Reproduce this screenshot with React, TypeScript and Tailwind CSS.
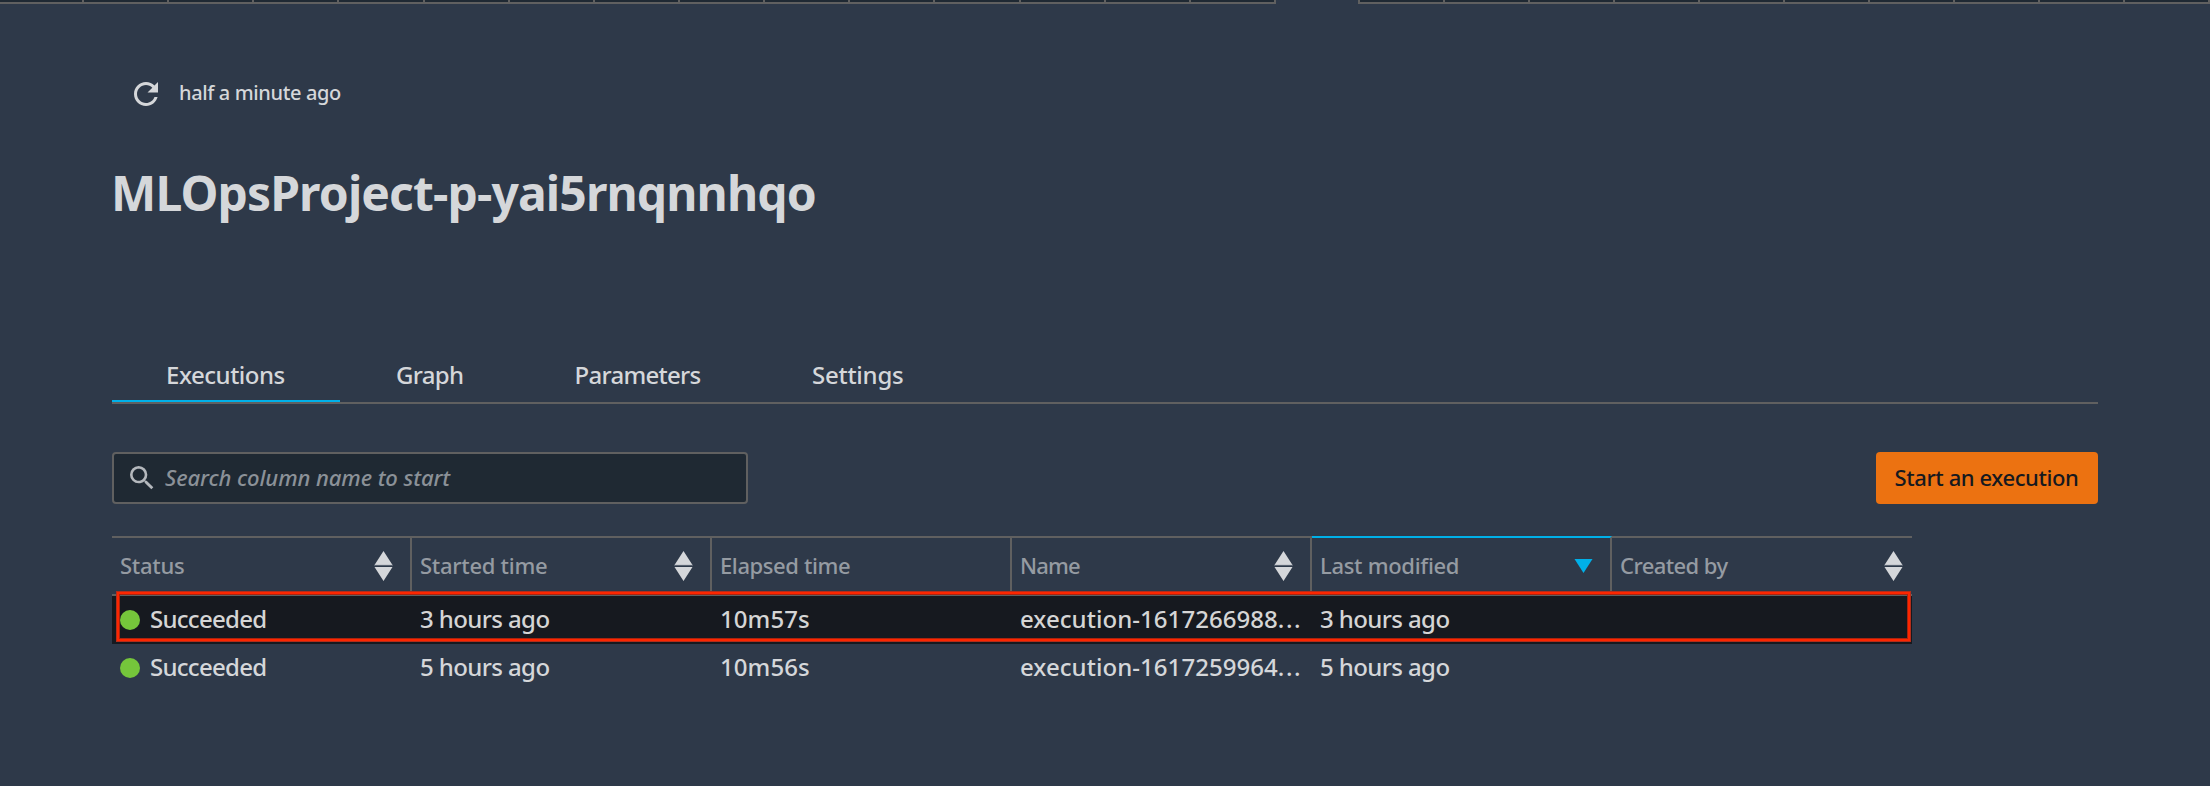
import React from "react";

const tabs = [
  { label: "Executions", cls: "w-[228px] pl-[54px] tracking-[-0.48px]", active: true },
  { label: "Graph", cls: "w-[179px] pl-[56px] tracking-[-0.68px]", active: false },
  { label: "Parameters", cls: "w-[237px] pl-[55.5px] tracking-[-0.71px]", active: false },
  { label: "Settings", cls: "w-[202px] pl-[56px] tracking-[-0.25px]", active: false },
];

type Sort = "none" | "both" | "desc";

const columns: { label: string; cls: string; sort: Sort }[] = [
  { label: "Status", cls: "pl-2 tracking-[-0.27px]", sort: "both" },
  { label: "Started time", cls: "pl-2 tracking-[-0.28px]", sort: "both" },
  { label: "Elapsed time", cls: "pl-2 tracking-[-0.4px]", sort: "none" },
  { label: "Name", cls: "pl-2 tracking-[-0.8px]", sort: "both" },
  { label: "Last modified", cls: "pl-2 tracking-[-0.3px]", sort: "desc" },
  { label: "Created by", cls: "pl-2 tracking-[-0.58px]", sort: "both" },
];

const rows = [
  { status: "Succeeded", started: "3 hours ago", elapsed: "10m57s", name: "execution-1617266988", modified: "3 hours ago", selected: true },
  { status: "Succeeded", started: "5 hours ago", elapsed: "10m56s", name: "execution-1617259964", modified: "5 hours ago", selected: false },
];

function TopStrip() {
  return (
    <div className="flex h-1 w-full">
      <div className="flex w-[1276px] border-b-2 border-[#606060] bg-[#1f2933]">
        <div className="w-[84px] border-r-2 border-[#606060]" />
        {Array.from({ length: 14 }, (_, i) => (
          <div key={i} className="flex-1 border-r-2 border-[#606060]" />
        ))}
      </div>
      <div className="w-[82px]" />
      <div className="flex flex-1 border-b-2 border-l-2 border-[#606060] bg-[#1f2933]">
        {Array.from({ length: 10 }, (_, i) => (
          <div key={i} className="flex-1 border-r-2 border-[#606060]" />
        ))}
      </div>
    </div>
  );
}

function RefreshIcon() {
  return (
    <svg viewBox="0 0 24 24" className="size-9" fill="#d5d7da">
      <path d="M17.65 6.35C16.2 4.9 14.21 4 12 4c-4.42 0-7.99 3.58-7.99 8s3.57 8 7.99 8c3.73 0 6.84-2.55 7.73-6h-2.08c-.82 2.33-3.04 4-5.65 4-3.31 0-6-2.69-6-6s2.69-6 6-6c1.66 0 3.14.69 4.22 1.78L13 11h7V4l-2.35 2.35z" />
    </svg>
  );
}

function SearchIcon() {
  return (
    <svg viewBox="0 0 24 24" className="size-8" fill="#b4b8bd">
      <path d="M15.5 14h-.79l-.28-.27A6.471 6.471 0 0 0 16 9.5 6.5 6.5 0 1 0 9.5 16c1.61 0 3.09-.59 4.23-1.57l.27.28v.79l5 4.99L20.49 19l-4.99-5zm-6 0C7.01 14 5 11.99 5 9.5S7.01 5 9.5 5 14 7.01 14 9.5 11.99 14 9.5 14z" />
    </svg>
  );
}

function SortIcon({ sort }: { sort: Sort }) {
  if (sort === "none") return null;
  if (sort === "desc") {
    return (
      <svg viewBox="0 0 19 30" className="h-[30px] w-[19px]" fill="#00b0e8">
        <path d="M0.5 8h18l-9 14z" />
      </svg>
    );
  }
  return (
    <svg viewBox="0 0 19 30" className="h-[30px] w-[19px]">
      <path d="M9.5 0L18.5 14H0.5z M0.5 16h18l-9 14z" fill="#d5d7da" />
      <path d="M0 14.3h19" stroke="#7d858f" strokeWidth="0.7" />
    </svg>
  );
}

export default function App() {
  return (
    <div className="h-[786px] w-full overflow-hidden bg-[#2e3949] font-['Noto_Sans','Open_Sans',sans-serif] font-medium text-[#d5d7da]">
      <TopStrip />
      <div className="px-28 pt-[72px]">
        <div className="flex h-9 items-center pl-4">
          <RefreshIcon />
          <span className="ml-[15px] pb-[3px] text-[20px] leading-7 tracking-[-0.37px]">half a minute ago</span>
        </div>

        <h1 className="-ml-px mt-[51px] h-[60px] text-[48px] leading-[60px] font-bold tracking-[-0.87px]">
          MLOpsProject-p-yai5rnqnnhqo
        </h1>

        <div className="mt-[127px] flex h-[54px] border-b-2 border-[#606060] text-[24px]">
          {tabs.map((t) => (
            <div key={t.label} className={`flex items-center border-b-2 ${t.active ? "border-[#00b0e8]" : "border-transparent"} ${t.cls}`}>
              {t.label}
            </div>
          ))}
        </div>

        <div className="mt-12 flex items-center justify-between text-[22px]">
          <div className="flex h-[52px] w-[636px] items-center rounded border-2 border-[#606060] bg-[#1f2933] pl-3">
            <SearchIcon />
            <span className="ml-[7px] pb-0.5 text-[#8b9198] italic tracking-[-0.08px]">Search column name to start</span>
          </div>
          <button className="flex h-[52px] w-[222px] items-center rounded bg-[#ec7211] pb-0.5 pl-[18.5px] tracking-[-0.4px] whitespace-nowrap text-[#16191f]">
            Start an execution
          </button>
        </div>

        <div className="relative mt-8 w-[1800px]">
          <div className="grid h-[60px] grid-cols-6 border-b-2 border-[#606060] text-[22px] text-[#959ba2]">
            {columns.map((c, i) => (
              <div
                key={c.label}
                className={`flex items-center justify-between border-t-2 ${c.sort === "desc" ? "border-t-[#00b0e8]" : "border-t-[#606060]"} ${i < 5 ? "border-r-2 border-r-[#606060] pr-[17px]" : "pr-[9px]"} ${c.cls}`}
              >
                <span className="pb-0.5">{c.label}</span>
                <SortIcon sort={c.sort} />
              </div>
            ))}
          </div>
          {rows.map((r) => (
            <div key={r.name} className={`grid h-12 grid-cols-6 items-center pb-[3px] text-[24px] leading-9 ${r.selected ? "bg-[#16191f] text-[#d5d5d5]" : ""}`}>
              <div className="flex items-center pl-2 tracking-[-0.72px]">
                <span className="mt-[3px] mr-2.5 size-5 rounded-full bg-[#75c63b]" />
                {r.status}
              </div>
              <div className="pl-2 tracking-[-0.6px]">{r.started}</div>
              <div className="pl-2 tracking-[0.07px]">{r.elapsed}</div>
              <div className="pl-2 tracking-[0.05px] whitespace-nowrap">
                {r.name}
                <span className="tracking-[1.6px]">...</span>
              </div>
              <div className="pl-2 tracking-[-0.6px]">{r.modified}</div>
              <div />
            </div>
          ))}
          <div className="pointer-events-none absolute top-14 left-[5px] h-[49px] w-[1793px] border-2 border-[#fd2600] shadow-[0_0_0_1px_#b32d1b,inset_0_0_0_1px_#a9240f]" />
        </div>
      </div>
    </div>
  );
}
